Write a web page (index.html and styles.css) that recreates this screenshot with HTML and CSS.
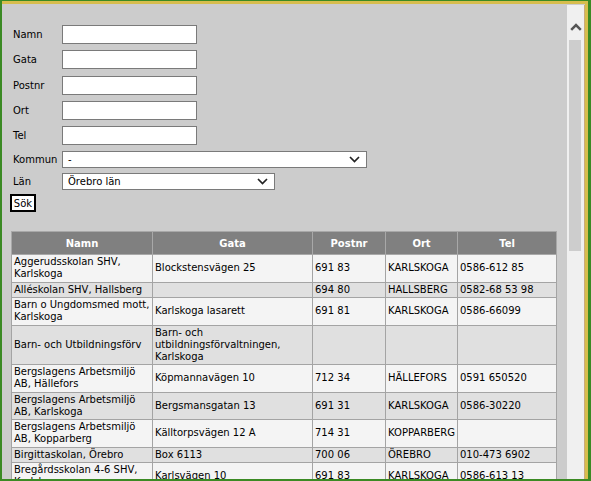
FILE: index.html
```html
<!DOCTYPE html>
<html lang="sv">
<head>
<meta charset="utf-8">
<title>Sök</title>
<link rel="stylesheet" href="styles.css">
</head>
<body>
<div class="frame">
  <div class="inner">
    <div class="content">
      <form class="search">
        <div class="field"><label>Namn</label><input type="text" class="txt"></div>
        <div class="field f2"><label>Gata</label><input type="text" class="txt"></div>
        <div class="field f3"><label>Postnr</label><input type="text" class="txt"></div>
        <div class="field"><label>Ort</label><input type="text" class="txt"></div>
        <div class="field"><label>Tel</label><input type="text" class="txt"></div>
        <div class="field sel"><label>Kommun</label>
          <div class="select wide"><span>-</span>
            <svg class="chev" width="11" height="7" viewBox="0 0 11 7"><path d="M1 1 L5.5 5.5 L10 1" fill="none" stroke="#222" stroke-width="1.7"/></svg>
          </div>
        </div>
        <div class="field sel lan"><label>Län</label>
          <div class="select narrow"><span>Örebro län</span>
            <svg class="chev" width="11" height="7" viewBox="0 0 11 7"><path d="M1 1 L5.5 5.5 L10 1" fill="none" stroke="#222" stroke-width="1.7"/></svg>
          </div>
        </div>
        <button type="button" class="btn">Sök</button>
      </form>
      <table class="results">
        <colgroup><col class="c1"><col class="c2"><col class="c3"><col class="c4"><col class="c5"></colgroup>
        <thead>
          <tr><th>Namn</th><th>Gata</th><th>Postnr</th><th>Ort</th><th>Tel</th></tr>
        </thead>
        <tbody>
          <tr><td>Aggerudsskolan SHV, Karlskoga</td><td>Blockstensvägen 25</td><td>691 83</td><td>KARLSKOGA</td><td>0586-612 85</td></tr>
          <tr><td>Alléskolan SHV, Hallsberg</td><td></td><td>694 80</td><td>HALLSBERG</td><td>0582-68 53 98</td></tr>
          <tr><td>Barn o Ungdomsmed mott, Karlskoga</td><td>Karlskoga lasarett</td><td>691 81</td><td>KARLSKOGA</td><td>0586-66099</td></tr>
          <tr><td>Barn- och Utbildningsförv</td><td>Barn- och utbildningsförvaltningen, Karlskoga</td><td></td><td></td><td></td></tr>
          <tr><td>Bergslagens Arbetsmiljö AB, Hällefors</td><td>Köpmannavägen 10</td><td>712 34</td><td>HÄLLEFORS</td><td>0591 650520</td></tr>
          <tr><td>Bergslagens Arbetsmiljö AB, Karlskoga</td><td>Bergsmansgatan 13</td><td>691 31</td><td>KARLSKOGA</td><td>0586-30220</td></tr>
          <tr><td>Bergslagens Arbetsmiljö AB, Kopparberg</td><td>Källtorpsvägen 12 A</td><td>714 31</td><td>KOPPARBERG</td><td></td></tr>
          <tr><td>Birgittaskolan, Örebro</td><td>Box 6113</td><td>700 06</td><td>ÖREBRO</td><td>010-473 6902</td></tr>
          <tr><td>Bregårdsskolan 4-6 SHV, Karlskoga</td><td>Karlsvägen 10</td><td>691 83</td><td>KARLSKOGA</td><td>0586-613 13</td></tr>
          <tr><td>Brickebackens skola, Örebro</td><td>Box 31200</td><td>701 35</td><td>ÖREBRO</td><td>019-21 10 00</td></tr>
        </tbody>
      </table>
    </div>
    <div class="scrollbar">
      <div class="up">
        <svg width="12" height="8" viewBox="0 0 12 8"><path d="M1.2 6.8 L6 2 L10.8 6.8" fill="none" stroke="#555" stroke-width="2.5"/></svg>
      </div>
      <div class="thumb"></div>
    </div>
  </div>
</div>
</body>
</html>
```
FILE: styles.css
```css
html, body {
  margin: 0;
  padding: 0;
}
body {
  font-family: "DejaVu Sans", Verdana, sans-serif;
  font-size: 10px;
  color: #000;
  background: #ccc;
}
.frame {
  width: 591px;
  height: 481px;
  box-sizing: border-box;
  border-style: solid;
  border-color: #3b8a24;
  border-width: 1px 3px 2px 2px;
  background: #ccc;
  overflow: hidden;
}
.inner {
  height: 100%;
  box-sizing: border-box;
  display: flex;
  border-top: 3px solid #d7bd4d;
  border-right: 3px solid #d7bd4d;
}
.content {
  flex: 1;
  min-width: 0;
  overflow: hidden;
  background: #cccccc;
}
.scrollbar {
  width: 17px;
  flex: none;
  margin-top: 1px;
  background: #f0f0f0;
  border-right: 1px solid #c8ab7c;
  display: flex;
  flex-direction: column;
}
.up {
  height: 35px;
  box-sizing: border-box;
  padding-top: 18px;
  display: flex;
  align-items: flex-start;
  justify-content: center;
}
.thumb {
  height: 211px;
  margin: 0 3px 0 2px;
  background: #cdcdcd;
}
.search {
  margin: 0;
  padding: 21px 0 0 8px;
  display: flex;
  flex-direction: column;
  align-items: flex-start;
}
.field {
  display: flex;
  align-items: center;
  height: 19px;
  margin-bottom: 6px;
}
.field.f2 {
  margin-bottom: 7px;
}
.field label {
  width: 49px;
  padding-left: 3px;
}
.txt {
  width: 135px;
  height: 19px;
  box-sizing: border-box;
  border: 1px solid #7a7a7a;
  background: #fff;
  margin: 0;
  padding: 0 3px;
  font: inherit;
}
.field.sel {
  height: 17px;
  margin-bottom: 5px;
}
.field.lan {
  margin-bottom: 4px;
}
.select {
  position: relative;
  height: 17px;
  box-sizing: border-box;
  border: 1px solid #7a7a7a;
  background: #fff;
  display: flex;
  align-items: center;
  padding-left: 5px;
}
.select.wide {
  width: 305px;
}
.select.narrow {
  width: 213px;
}
.chev {
  position: absolute;
  right: 6px;
  top: 4px;
}
.btn {
  width: 26px;
  height: 18px;
  box-sizing: border-box;
  margin: 0;
  padding: 0;
  border: 2px solid #000;
  background: #fff;
  font: inherit;
  color: #000;
}
.results {
  margin: 19px 0 0 9px;
  width: 545px;
  table-layout: fixed;
  border-collapse: collapse;
}
.c1 { width: 141px; }
.c2 { width: 160px; }
.c3 { width: 73px; }
.c4 { width: 72px; }
.c5 { width: 99px; }
.results th {
  background: #808080;
  color: #fff;
  font-weight: bold;
  height: 22px;
  padding: 0 2px;
  border: 1px solid #a8a8a8;
  text-align: center;
}
.results td {
  border: 1px solid #a4a4a4;
  padding: 1px 2px 1.5px;
  line-height: 12px;
  vertical-align: middle;
  text-align: left;
}
.results tbody tr:nth-child(odd) td {
  background: #f4f4f4;
}
.results tbody tr:nth-child(even) td {
  background: #e0e0e0;
}
```
